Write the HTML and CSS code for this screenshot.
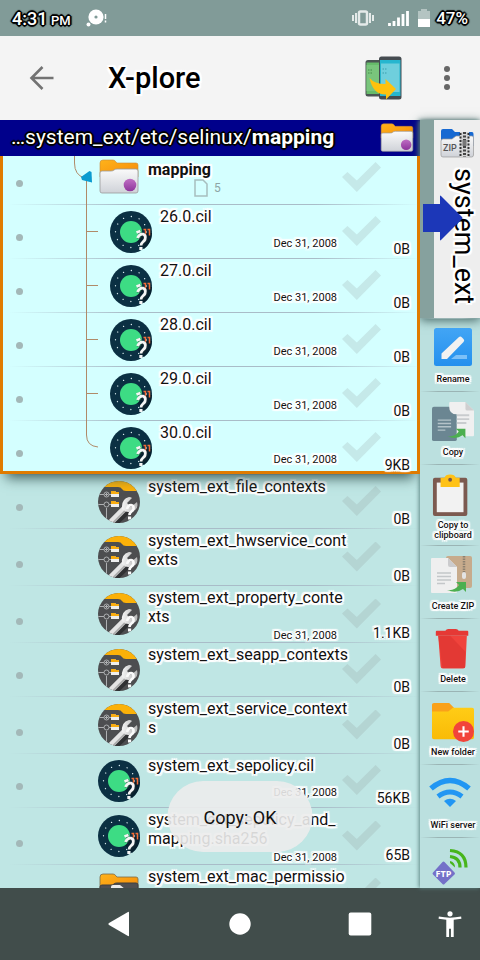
FILE: index.html
```html
<!DOCTYPE html>
<html lang="en">
<head>
<meta charset="utf-8">
<meta name="viewport" content="width=device-width, initial-scale=1">
<title>X-plore</title>
<link rel="stylesheet" href="styles.css">
</head>
<body>
<svg class="defs" aria-hidden="true">
  <defs>
    <linearGradient id="g-paper" x1="0" y1="0" x2="0" y2="1"><stop offset="0" stop-color="#fafafa"/><stop offset="1" stop-color="#cfd2d8"/></linearGradient>
    <linearGradient id="g-orange" x1="0" y1="0" x2="1" y2="1"><stop offset="0" stop-color="#ffb31a"/><stop offset="1" stop-color="#f58a0a"/></linearGradient>
    <linearGradient id="g-purple" x1="0" y1="0" x2="0" y2="1"><stop offset="0" stop-color="#c06fc4"/><stop offset="1" stop-color="#8e359c"/></linearGradient>
    <linearGradient id="g-blue" x1="0" y1="0" x2="0" y2="1"><stop offset="0" stop-color="#42a5f5"/><stop offset="1" stop-color="#2490ee"/></linearGradient>
    <linearGradient id="g-yellow" x1="0" y1="0" x2="0" y2="1"><stop offset="0" stop-color="#ffcc16"/><stop offset="1" stop-color="#f9bb06"/></linearGradient>
    <linearGradient id="g-metal" x1="0" y1="0" x2="1" y2="0"><stop offset="0" stop-color="#f4f4f4"/><stop offset="1" stop-color="#b5b5b5"/></linearGradient>
    <clipPath id="c-round"><circle cx="21" cy="21" r="21"/></clipPath>
  </defs>
  <symbol id="folder" viewBox="0 0 40 36">
    <path d="M1 4q0-3 3-3h10q2 0 3 2l1 1h19q2 0 2 2v12H1z" fill="url(#g-orange)" stroke="#c98a3a" stroke-width=".6"/>
    <path d="M1 14q0-2 2-2h9q2 0 3-1t3-1h19q2 0 2 2v20q0 2-2 2H3q-2 0-2-2z" fill="url(#g-paper)" stroke="#9a9a9a" stroke-width=".8"/>
    <circle cx="31" cy="26" r="6.3" fill="url(#g-purple)"/>
  </symbol>
  <symbol id="folder-dark" viewBox="0 0 40 36">
    <path d="M1 4q0-3 3-3h10q2 0 3 2l1 1h19q2 0 2 2v12H1z" fill="url(#g-orange)" stroke="#7a6a4a" stroke-width=".8"/>
    <path d="M1 14q0-2 2-2h9q2 0 3-1t3-1h19q2 0 2 2v20q0 2-2 2H3q-2 0-2-2z" fill="#505052" stroke="#3e3e40"/>
    <path d="M12 14q0-2 2-2h7l5 4v20H12z" fill="#ececec"/>
  </symbol>
  <symbol id="android" viewBox="0 0 42 42">
    <circle cx="21" cy="21" r="21" fill="#0b3043"/>
    <circle cx="21" cy="21" r="15.5" fill="none" stroke="#d7e8ec" stroke-width="1.3" stroke-linecap="round" stroke-dasharray=".1 8"/>
    <path d="M26 29l8 9q8-6 8-16l-8 0z" fill="#06202f"/>
    <circle cx="21" cy="21" r="11" fill="#3ddc84"/>
    <path d="M33.500 18.500h2v6M37.500 18.500h2v6" fill="none" stroke="#f26b35" stroke-width="1.500"/>
    <path d="M27.500 22l4-1M28.500 28q2-4.500 5.500-3.800 3.300 1 2 5.300c-1.500 3-4 2.500-4 6" fill="none" stroke="#1b2a30" stroke-width="4" opacity=".5"/>
    <path d="M26.500 21.500l4-1.500M27.500 27q2-4.500 5.500-3.800 3.300 1 2 5.300c-1.500 3-4 2.500-4 6" fill="none" stroke="#f5f5f5" stroke-width="2.800"/>
    <rect x="29.300" y="36" width="3.200" height="3" fill="#f5f5f5"/>
  </symbol>
  <symbol id="config" viewBox="0 0 42 42">
    <g clip-path="url(#c-round)">
      <rect width="42" height="42" fill="#4d4e50"/>
      <path d="M0 0h42v10H28q-3 0-4-2t-4-2H0z" fill="#fbb109"/>
      <path d="M0 13.500h13M0 23.500h13M8.500 27v15" stroke="#aeb0b2"/>
      <g fill="#4d4e50" stroke="#aeb0b2"><circle cx="8.500" cy="13.500" r="2.500"/><circle cx="8.500" cy="23.500" r="2.500"/></g>
      <path d="M7 13.500h3M8.500 12v3" stroke="#aeb0b2"/>
      <path d="M13 10h4l1 1h3v5h-8zM13 20h4l1 1h3v5h-8z" fill="#eee"/>
      <path d="M13 10h4l1 1h3v2h-8zM13 20h4l1 1h3v2h-8z" fill="#f9ad12"/>
      <path d="M15 42l16-15" stroke="#303133" stroke-width="9"/>
      <path d="M12 42l15-15" stroke="#e4e4e4" stroke-width="6"/>
      <path d="M14 43l15-15" stroke="#aaa" stroke-width="2"/>
      <path d="M24 28q-1-10 7-12 2 0 3 1l-5 5 4 4 6-5q2 7-4 9-5 2-8 0z" fill="url(#g-metal)"/>
      <path d="M29 28q1-4 4-4 3 .5 2.500 4c-1 3-4 2.500-4 6" fill="none" stroke="#fafafa" stroke-width="2.600"/>
      <rect x="30" y="35.500" width="3.200" height="3" fill="#fafafa"/>
    </g>
  </symbol>
</svg>

<header class="status">
  <span class="clock">4:31 <small>PM</small></span>
  <svg class="status-app" viewBox="0 0 22 18" aria-hidden="true"><circle cx="10" cy="8" r="7.600" fill="#fff"/><circle cx="10" cy="8" r="1.600" fill="#819b98"/><circle cx="2.500" cy="15.500" r="2" fill="#fff"/><path d="M19.500 5v5M19.500 11.500v2" stroke="#fff" stroke-width="1.500"/></svg>
  <span class="grow"></span>
  <svg class="vibrate" viewBox="0 0 22 16" aria-hidden="true"><rect x="7" y="1.500" width="8" height="13" rx="1.500" fill="none" stroke="#e4eae9" stroke-width="2.500"/><path d="M4 3v10M18 3v10M1 5v6M21 5v6" stroke="#e4eae9" stroke-width="2"/></svg>
  <svg class="signal" viewBox="0 0 22 16" aria-hidden="true"><path d="M1.500 13v3M6 11v5M10.500 7.500v8.500M15 4v12M19.500 1v15" stroke="#fff" stroke-width="2.800"/></svg>
  <svg class="battery" viewBox="0 0 12 18" aria-hidden="true"><path d="M3 0h6v2h3v16H0V2h3z" fill="#b4c4c2"/><path d="M0 10h12v8H0z" fill="#fff"/></svg>
  <span class="percent">47%</span>
</header>

<header class="appbar">
  <button class="back" aria-label="Back"><svg viewBox="0 0 24 24" aria-hidden="true"><path d="M23.500 12H1.500M12.500 1L1.500 12l11 11" fill="none" stroke="#737373" stroke-width="2.600"/></svg></button>
  <h1>X-plore</h1>
  <button class="transfer" aria-label="Switch pane"><svg viewBox="0 0 37 44" aria-hidden="true">
    <rect x=".5" y="4" width="20" height="36.500" rx="2.500" fill="#4a5553"/><path d="M1.500 6.500h19V38h-19z" fill="#66bb6a"/><path d="M1.500 9h13v26h-13z" fill="#79c57c"/>
    <path d="M3 14h1.500M3 17h1.500M5.500 14H7M5.500 17H7" stroke="#468c4b"/>
    <rect x="14" y=".5" width="22.500" height="43" rx="2.500" fill="#454b50"/><path d="M15 4h20.500v36H15z" fill="#26b6cf"/><path d="M16 7.500h18.500V36H16z" fill="#6fcfdd"/>
    <path d="M17.500 13h1.500M17.500 17h1.500M20 13h1.500M20 17h1.500" stroke="#3d9fac"/>
    <path d="M4.500 22q5 6 16 6v-5L31 33 21 43.500v-5Q8 39 4.500 22z" fill="#ffc10d"/></svg></button>
  <button class="more" aria-label="More options"><svg viewBox="0 0 6 24" fill="#666" aria-hidden="true"><circle cx="3" cy="3" r="3"/><circle cx="3" cy="12" r="3"/><circle cx="3" cy="21" r="3"/></svg></button>
</header>

<main class="panes">
  <section class="pane">
    <div class="path"><h2>…system_ext/etc/selinux/<b>mapping</b></h2><svg class="path-icon" aria-hidden="true"><use href="#folder"/></svg></div>
    <div class="files">
      <ul class="group">
        <li class="row parent"><span class="dot"></span>
          <svg class="tree" viewBox="0 0 24 54" aria-hidden="true"><path d="M.5 0v13q0 12 10 15" fill="none" stroke="#b08a68"/><path d="M12.500 30v24" stroke="#b08a68"/><path d="M7 27l8.500-6 2 1 .5 10.500L8 30z" fill="#0a9bd0"/></svg>
          <svg class="icon folder-icon" aria-hidden="true"><use href="#folder"/></svg>
          <div class="text"><b class="name">mapping</b><span class="count"><svg viewBox="0 0 14 18" aria-hidden="true"><path d="M1 1h8l4 4v12H1z" fill="none" stroke="#a7bebe" stroke-width="1.500"/></svg>5</span></div>
          <div class="meta"><input type="checkbox" aria-label="Select mapping"></div></li>
        <li class="row child"><span class="dot"></span><svg class="tree" viewBox="0 0 24 54" aria-hidden="true"><path d="M12.500 0v54M12.500 27.500H24" stroke="#b08a68"/></svg><svg class="icon" aria-hidden="true"><use href="#android"/></svg>
          <div class="text"><span class="name">26.0.cil</span><time>Dec 31, 2008</time></div><div class="meta"><input type="checkbox" aria-label="Select 26.0.cil"><span class="size">0B</span></div></li>
        <li class="row child"><span class="dot"></span><svg class="tree" viewBox="0 0 24 54" aria-hidden="true"><path d="M12.500 0v54M12.500 27.500H24" stroke="#b08a68"/></svg><svg class="icon" aria-hidden="true"><use href="#android"/></svg>
          <div class="text"><span class="name">27.0.cil</span><time>Dec 31, 2008</time></div><div class="meta"><input type="checkbox" aria-label="Select 27.0.cil"><span class="size">0B</span></div></li>
        <li class="row child"><span class="dot"></span><svg class="tree" viewBox="0 0 24 54" aria-hidden="true"><path d="M12.500 0v54M12.500 27.500H24" stroke="#b08a68"/></svg><svg class="icon" aria-hidden="true"><use href="#android"/></svg>
          <div class="text"><span class="name">28.0.cil</span><time>Dec 31, 2008</time></div><div class="meta"><input type="checkbox" aria-label="Select 28.0.cil"><span class="size">0B</span></div></li>
        <li class="row child"><span class="dot"></span><svg class="tree" viewBox="0 0 24 54" aria-hidden="true"><path d="M12.500 0v54M12.500 27.500H24" stroke="#b08a68"/></svg><svg class="icon" aria-hidden="true"><use href="#android"/></svg>
          <div class="text"><span class="name">29.0.cil</span><time>Dec 31, 2008</time></div><div class="meta"><input type="checkbox" aria-label="Select 29.0.cil"><span class="size">0B</span></div></li>
        <li class="row child"><span class="dot"></span><svg class="tree" viewBox="0 0 24 54" aria-hidden="true"><path d="M12.500 0v15q0 11 11.500 12" fill="none" stroke="#b08a68"/></svg><svg class="icon" aria-hidden="true"><use href="#android"/></svg>
          <div class="text"><span class="name">30.0.cil</span><time>Dec 31, 2008</time></div><div class="meta"><input type="checkbox" aria-label="Select 30.0.cil"><span class="size">9KB</span></div></li>
      </ul>
      <ul>
        <li class="row"><span class="dot"></span><span class="tree"></span><svg class="icon" aria-hidden="true"><use href="#config"/></svg>
          <div class="text"><span class="name">system_ext_file_contexts</span></div><div class="meta"><input type="checkbox" aria-label="Select system_ext_file_contexts"><span class="size">0B</span></div></li>
        <li class="row tall"><span class="dot"></span><span class="tree"></span><svg class="icon" aria-hidden="true"><use href="#config"/></svg>
          <div class="text"><span class="name">system_ext_hwservice_contexts</span></div><div class="meta"><input type="checkbox" aria-label="Select system_ext_hwservice_contexts"><span class="size">0B</span></div></li>
        <li class="row tall"><span class="dot"></span><span class="tree"></span><svg class="icon" aria-hidden="true"><use href="#config"/></svg>
          <div class="text"><span class="name">system_ext_property_contexts</span><time>Dec 31, 2008</time></div><div class="meta"><input type="checkbox" aria-label="Select system_ext_property_contexts"><span class="size">1.1KB</span></div></li>
        <li class="row"><span class="dot"></span><span class="tree"></span><svg class="icon" aria-hidden="true"><use href="#config"/></svg>
          <div class="text"><span class="name">system_ext_seapp_contexts</span></div><div class="meta"><input type="checkbox" aria-label="Select system_ext_seapp_contexts"><span class="size">0B</span></div></li>
        <li class="row tall"><span class="dot"></span><span class="tree"></span><svg class="icon" aria-hidden="true"><use href="#config"/></svg>
          <div class="text"><span class="name">system_ext_service_contexts</span></div><div class="meta"><input type="checkbox" aria-label="Select system_ext_service_contexts"><span class="size">0B</span></div></li>
        <li class="row"><span class="dot"></span><span class="tree"></span><svg class="icon" aria-hidden="true"><use href="#android"/></svg>
          <div class="text"><span class="name">system_ext_sepolicy.cil</span><time>Dec 31, 2008</time></div><div class="meta"><input type="checkbox" aria-label="Select system_ext_sepolicy.cil"><span class="size">56KB</span></div></li>
        <li class="row tall"><span class="dot"></span><span class="tree"></span><svg class="icon" aria-hidden="true"><use href="#android"/></svg>
          <div class="text"><span class="name">system_ext_sepolicy_and_<wbr>mapping.sha256</span><time>Dec 31, 2008</time></div><div class="meta"><input type="checkbox" aria-label="Select sha256 file"><span class="size">65B</span></div></li>
        <li class="row tall"><span class="dot"></span><span class="tree"></span><svg class="icon folder-icon" aria-hidden="true"><use href="#folder-dark"/></svg>
          <div class="text"><span class="name">system_ext_mac_permissio</span></div><div class="meta"><input type="checkbox" aria-label="Select permissions file"></div></li>
      </ul>
    </div>
  </section>

  <aside class="side">
    <button class="tab">
      <svg class="zip" viewBox="0 0 34 30" aria-hidden="true"><path d="M1 3q0-2 2-2h9l3 3h17q1.500 0 1.500 2v12H1z" fill="#1769d2"/><path d="M1 13q0-2 2-2h9l4-3h16q1.500 0 1.500 2v17q0 2-2 2H3q-2 0-2-2z" fill="url(#g-paper)" stroke="#999" stroke-width=".7"/><path d="M20 4h9v25h-9z" fill="#d5d5d5"/><path d="M20.500 5v24M28.500 5v24" stroke="#333" stroke-width="2" stroke-dasharray="2 1.500"/><path d="M24.500 4v25" stroke="#444" stroke-width="3" stroke-dasharray="2 1.500"/><rect x="22.500" y="12" width="4" height="6" fill="#777"/><text x="3" y="23" class="i-zip">ZIP</text></svg>
      <span>system_ext</span>
    </button>
    <svg class="arrow" viewBox="0 0 40 46" aria-hidden="true"><path d="M0 9h17V1.500q0-1.500 1-.5l21 21q1 1 0 2L18 45q-1 1-1-.5V37H0z" fill="#1c37b8"/></svg>
    <div class="tools">
      <button><svg viewBox="0 0 46 42" aria-hidden="true"><rect x="4" y="0" width="38" height="38" rx="2.500" fill="url(#g-blue)"/><path d="M11.500 25.500L29 9q1.500-1 3 .5l1.500 1.500q1.500 1.500 0 3L17 31h-5.500z" fill="#f1f1f1"/><path d="M26 27h11v4H21z" fill="#7cc0f8"/></svg>Rename</button>
      <button><svg viewBox="0 0 46 44" aria-hidden="true"><rect x="1" y="6" width="26" height="36" rx="2" fill="#6b8692"/><path d="M19 2q0-1 1-1h16l9 9v26q0 1-1 1H27V14q-8 0-8-8z" fill="#f0f0f0"/><path d="M36 1l9 9h-7q-2 0-2-2z" fill="#cfcfd0"/><path d="M27 14h13v2H27zM27 18h13v2H27zM27 22h10v2H27z" fill="#c9ccce"/><path d="M7 20h14M7 23.500h14M7 27h14M7 30.500h8" stroke="#b4c3c9" stroke-width="1.500"/><path d="M17 37q8 1 12-5l-3-3h10v10l-3-3q-7 5-16 1z" fill="#4caf50"/></svg>Copy</button>
      <button><svg viewBox="0 0 46 44" aria-hidden="true"><rect x="2" y="4" width="36" height="40" rx="2" fill="#7c5a50"/><rect x="6" y="9" width="28" height="31" fill="#f2f2f2"/><path d="M10 4h4q1-3.500 6-3.500T26 4h4v9.500H10z" fill="#ffc216"/><circle cx="20" cy="6" r="2" fill="#795548"/></svg><span>Copy to<br>clipboard</span></button>
      <button><svg viewBox="0 0 46 42" aria-hidden="true"><rect x="16" y="1" width="26" height="32" rx="2" fill="#c7ab8c"/><path d="M34 1v17" stroke="#8d8170" stroke-width="2.500" stroke-dasharray="1.500 1"/><rect x="32" y="17" width="4" height="7" rx="2" fill="#e3e3e3"/><path d="M1 4q0-1 1-1h16l9 9v25q0 1-1 1H2q-1 0-1-1z" fill="#efefef"/><path d="M18 3l9 9h-7q-2 0-2-2z" fill="#cbcbcd"/><path d="M7 18h14M7 21.500h14M7 25h14M7 28.500h8" stroke="#c4c7c9" stroke-width="1.500"/><path d="M17 35q8 1 12-5l-3-3h10v10l-3-3q-7 5-16 1z" fill="#4caf50"/></svg>Create ZIP</button>
      <button><svg viewBox="0 0 46 44" aria-hidden="true"><path d="M6 3h9q1-2 3-2h8q2 0 3 2h9q1 0 1 1v4H5V4q0-1 1-1z" fill="#e53935"/><path d="M7.500 8h30L36 40q0 2.500-2.500 2.500h-21Q10 42.500 10 40z" fill="#f0433c"/><path d="M7.500 8H20l16 17-.5 17H12z" fill="#df3632" opacity=".75"/></svg>Delete</button>
      <button><svg viewBox="0 0 46 44" aria-hidden="true"><path d="M1 4q0-2 2-2h16l5 5v7H1z" fill="#f9a11a"/><path d="M1 11h17l5-4h20q2 0 2 2v29q0 2-2 2H3q-2 0-2-2z" fill="url(#g-yellow)"/><circle cx="34" cy="32" r="11" fill="#f2443a"/><path d="M34 26.500v11M28.500 32h11" stroke="#fff" stroke-width="2.200"/></svg>New folder</button>
      <button><svg viewBox="0 0 46 42" aria-hidden="true"><g fill="none" stroke="#2196f3" stroke-width="5.500"><path d="M1 14.500q19-16 38 0"/><path d="M8 22.500q12-9 24 0" stroke-width="5"/></g><path d="M14 27q6-4.500 12 0l-6 6z" fill="#2196f3"/></svg>WiFi server</button>
      <button aria-label="FTP server"><svg viewBox="0 0 46 42" aria-hidden="true"><path d="M12.500 15q1-1 2 0l10 10.500q1 1 0 2L14.500 37q-1 1-2 0L3 27.500q-1-1 0-2z" fill="#7470c8"/><g fill="none" stroke="#47b51c" stroke-width="3.200"><path d="M20 3.500q16 1 16 17M20 9.500q10 1 10 11"/></g><path d="M20 14q5 1 5 6.500L20 16z" fill="#47b51c"/><text x="13.500" y="29.500" class="i-ftp">FTP</text></svg></button>
    </div>
  </aside>
  <div class="toast" role="status">Copy: OK</div>
</main>

<nav class="navbar" aria-label="System">
  <button aria-label="Back"><svg viewBox="0 0 24 26" aria-hidden="true"><path d="M21 1.500v23q0 1-1 .5L1 14q-1.500-1 0-2L20 1q1-.5 1 .5z" fill="#fff"/></svg></button>
  <button aria-label="Home"><svg viewBox="0 0 24 26" aria-hidden="true"><circle cx="12" cy="13" r="10.700" fill="#fff"/></svg></button>
  <button aria-label="Recents"><svg viewBox="0 0 24 26" aria-hidden="true"><rect x=".7" y="1.500" width="22.600" height="23" rx="2" fill="#fff"/></svg></button>
  <button class="access" aria-label="Accessibility"><svg viewBox="0 0 24 28" aria-hidden="true"><circle cx="12" cy="3" r="2.800" fill="#fff"/><path d="M0 6q12 2.500 24 0l.3 2.300L16 9.500V28h-3v-9h-2v9H8V9.500L-.3 8.300z" fill="#fff"/></svg></button>
</nav>
</body>
</html>
```
FILE: styles.css
```css
:root {
  --halo: 1px 0 0 #fff, -1px 0 0 #fff, 0 1px 0 #fff, 0 -1px 0 #fff,
    2px 0 1px #fff, -2px 0 1px #fff, 0 2px 1px #fff, 0 -2px 1px #fff,
    2px 2px 1px #fff, -2px -2px 1px #fff, 2px -2px 1px #fff, -2px 2px 1px #fff;
  --ink: 1px 0 0 #000, -1px 0 0 #000, 0 1px 0 #000, 0 -1px 0 #000,
    2px 0 1px #000, -2px 0 1px #000, 0 2px 1px #000, 0 -2px 1px #000,
    1px 1px 0 #000, -1px -1px 0 #000, 1px -1px 0 #000, -1px 1px 0 #000;
}
* { box-sizing: border-box; }
body {
  margin: 0;
  height: 100vh;
  display: flex;
  flex-direction: column;
  overflow: hidden;
  font-family: Roboto, sans-serif;
  color: #111;
}
button {
  border: 0;
  padding: 0;
  background: none;
  font: inherit;
  color: inherit;
}
svg { display: block; flex: none; overflow: visible; text-shadow: none; }
ul { list-style: none; margin: 0; padding: 0; }
h1, h2 { margin: 0; }
.defs { position: absolute; width: 0; height: 0; }
.grow { flex: 1; }

.status {
  flex: none;
  height: 36px;
  padding: 0 12px;
  display: flex;
  align-items: center;
  background: #819b98;
  color: #fff;
  font-size: 18px;
  font-weight: 500;
  text-shadow: var(--ink);
}
.status small { font-size: 13px; margin-left: -1px; }
.status-app { width: 22px; height: 18px; margin-left: 15px; }
.vibrate { width: 22px; height: 16px; margin-right: 14px; }
.signal { width: 22px; height: 16px; margin-right: 8px; }
.battery { width: 12px; height: 18px; margin-right: 6px; }
.percent { font-size: 17px; }

.appbar {
  flex: none;
  height: 84px;
  padding: 0 30px;
  display: flex;
  align-items: center;
  background: #f4f4f4;
}
.back svg { width: 24px; height: 24px; }
.appbar h1 {
  flex: 1;
  margin-left: 54px;
  font-size: 29px;
  font-weight: 500;
  color: #000;
  text-shadow: var(--halo);
}
.transfer svg { width: 37px; height: 44px; }
.more { margin-left: 42px; }
.more svg { width: 6px; height: 24px; }

.panes { flex: 1; min-height: 0; display: flex; position: relative; }
.pane {
  flex: 1;
  min-width: 0;
  display: flex;
  flex-direction: column;
  background: #bfe6e4;
}
.path {
  flex: none;
  height: 36px;
  padding: 0 6px 0 11px;
  display: flex;
  align-items: center;
  justify-content: space-between;
  background: #00008b;
  color: #fff;
}
.path h2 {
  padding-bottom: 3px;
  font-size: 21px;
  font-weight: 400;
  white-space: nowrap;
  text-shadow: var(--ink);
}
.path b { font-weight: 700; }
.path-icon { width: 34px; height: 30px; }

.files { flex: 1; min-height: 0; overflow: hidden; display: flow-root; }
.group {
  position: relative;
  z-index: 2;
  display: flow-root;
  background: #d4ffff;
  box-shadow: inset 3px 0 #e07b00, inset -3px 0 #e07b00, inset 0 -3px #e07b00, 0 10px 12px -6px #3f5f5d;
}
.row {
  display: flex;
  min-height: 54px;
  background: linear-gradient(90deg, #8aa6b000 2%, #a9bcc8 30%, #a9bcc8 75%, #8aa6b000) 0 0 / 100% 1px no-repeat;
}
.parent { margin-top: -6px; }
.tall { min-height: 57px; }
.dot {
  width: 7px;
  height: 7px;
  margin: 30px 51px 0 16px;
  border-radius: 50%;
  background: #a3b8b8;
  flex: none;
}
.tall .dot { margin-top: 33px; }
.tree { width: 24px; height: 54px; flex: none; }
.icon { width: 42px; height: 42px; margin-top: 7px; }
.tall .icon { margin-top: 8px; }
.child .icon { margin-left: 12px; }
.row .folder-icon { height: 36px; margin-top: 9px; }
.text {
  flex: 1;
  min-width: 0;
  padding: 3px 0 0 8px;
  display: flex;
  flex-direction: column;
}
.name {
  min-height: 30px;
  margin-right: -5px;
  font-size: 16px;
  line-height: 19px;
  word-break: break-all;
  text-shadow: var(--halo);
}
.parent .text { padding-top: 10px; }
.parent .name { min-height: 19px; }
.count {
  display: flex;
  align-items: center;
  gap: 6px;
  padding-left: 46px;
  font-size: 12px;
  line-height: 18px;
  color: #8ea5a5;
}
.count svg { width: 14px; height: 18px; }
time {
  align-self: flex-end;
  margin-right: 7px;
  font-size: 11px;
  line-height: 13px;
  text-shadow: var(--halo);
}
.tall time { margin-top: 3px; }
.meta {
  flex: none;
  width: 76px;
  padding-right: 10px;
  display: grid;
}
.meta > * { grid-area: 1 / 1; }
.meta input {
  appearance: none;
  align-self: center;
  width: 39px;
  height: 30px;
  margin: 0 0 0 -2px;
  background: #8a909033;
  clip-path: polygon(0 50%, 14% 33%, 38% 62%, 86% 0, 100% 18%, 38% 100%);
}
.size {
  align-self: end;
  justify-self: end;
  font-size: 14px;
  line-height: 18px;
  text-shadow: var(--halo);
}

.side {
  flex: none;
  width: 60px;
  position: relative;
  z-index: 1;
  display: flex;
  flex-direction: column;
  background: #bbe0df;
  box-shadow: -1px 0 4px #5f8886;
}
.tab {
  flex: none;
  height: 198px;
  padding: 8px 0 0 6px;
  display: flex;
  flex-direction: column;
  gap: 10px;
  background: #eee;
  border-left: 14px solid #86a19e;
  box-shadow: 0 2px 10px #3f5f5d;
}
.zip { width: 34px; height: 30px; }
.tab span {
  writing-mode: vertical-rl;
  font-size: 27px;
  line-height: 32px;
  color: #000;
  text-shadow: var(--halo);
}
.arrow {
  position: absolute;
  left: 3px;
  top: 75px;
  width: 40px;
  height: 46px;
}
.tools { flex: 1; min-height: 0; overflow: hidden; }
.tools button {
  width: 100%;
  min-height: 73px;
  padding: 10px 0 5px 6px;
  display: flex;
  flex-direction: column;
  align-items: center;
  justify-content: flex-start;
  gap: 4px;
  font-size: 9px;
  font-weight: 500;
  line-height: 10px;
  text-align: center;
  white-space: nowrap;
  text-shadow: var(--halo);
  background: linear-gradient(90deg, #9ab4b400, #9ab4b4 30%, #9ab4b4 70%, #9ab4b400) 0 0 / 100% 1px no-repeat;
}
.tools svg { width: 46px; height: 42px; }

.toast {
  position: absolute;
  z-index: 3;
  left: 50%;
  bottom: 36px;
  transform: translateX(-50%);
  padding: 25px 36px 22px;
  border-radius: 36px;
  background: #ececece6;
  font-size: 18px;
  line-height: 24px;
  white-space: nowrap;
}

.navbar {
  flex: none;
  height: 72px;
  padding: 0 0 0 60px;
  display: flex;
  align-items: center;
  background: #414d4b;
}
.navbar button { flex: 1; display: flex; justify-content: center; }
.navbar svg { width: 24px; height: 26px; }
.navbar .access { flex: none; width: 60px; }

.i-zip { font: 500 9px Roboto, sans-serif; fill: #555; }
.i-ftp { font: 700 9px "Open Sans", sans-serif; fill: #fff; text-anchor: middle; }
```
